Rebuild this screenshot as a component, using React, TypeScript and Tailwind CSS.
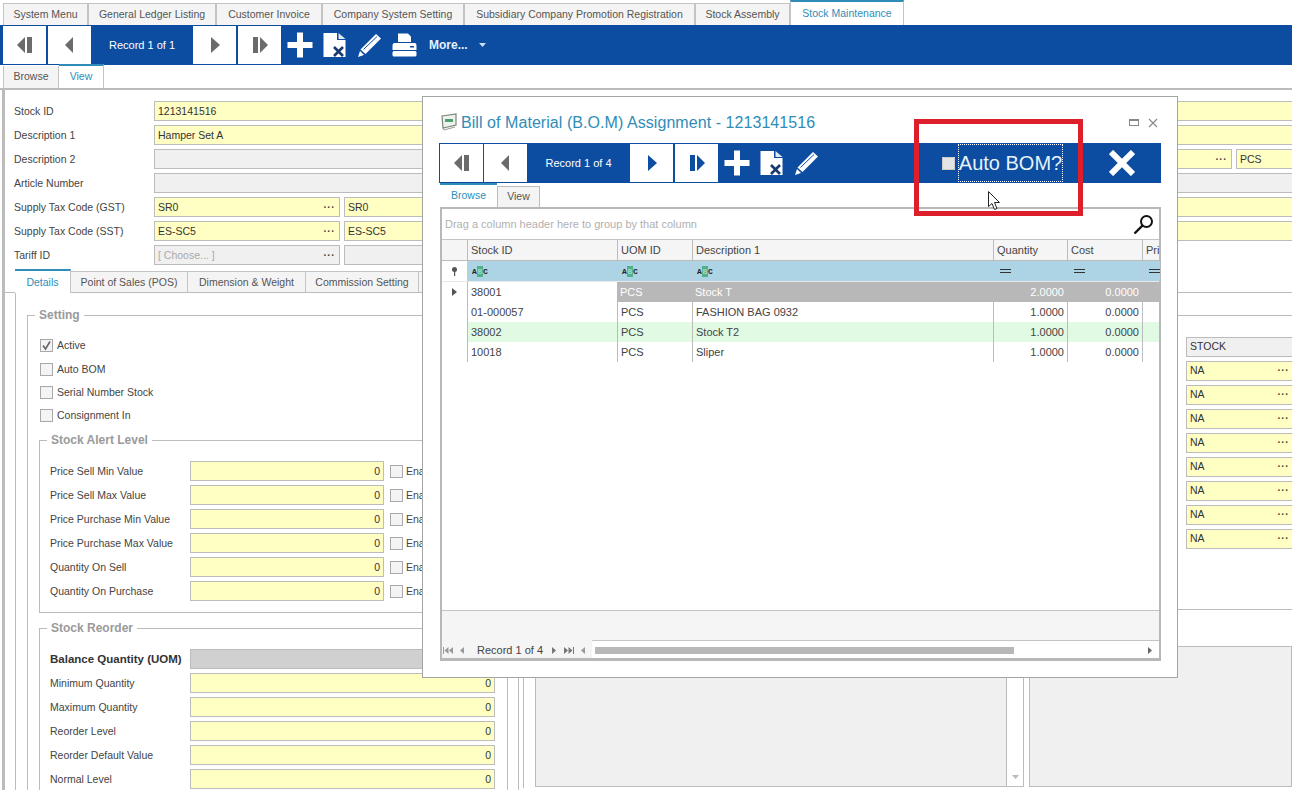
import type { ReactNode } from "react"

const tabs = [
  { label: "System Menu", w: "w-[85px]" },
  { label: "General Ledger Listing", w: "w-[128px]" },
  { label: "Customer Invoice", w: "w-[106px]" },
  { label: "Company System Setting", w: "w-[142px]" },
  { label: "Subsidiary Company Promotion Registration", w: "w-[231px]" },
  { label: "Stock Assembly", w: "w-[95px]" },
]

const alertRows = [
  "Price Sell Min Value",
  "Price Sell Max Value",
  "Price Purchase Min Value",
  "Price Purchase Max Value",
  "Quantity On Sell",
  "Quantity On Purchase",
]

const reorderRows = ["Minimum Quantity", "Maximum Quantity", "Reorder Level", "Reorder Default Value", "Normal Level"]

const gridRows = [
  { id: "38001", uom: "PCS", desc: "Stock T", qty: "2.0000", selected: true },
  { id: "01-000057", uom: "PCS", desc: "FASHION BAG 0932", qty: "1.0000" },
  { id: "38002", uom: "PCS", desc: "Stock T2", qty: "1.0000", green: true },
  { id: "10018", uom: "PCS", desc: "Sliper", qty: "1.0000" },
]

const gridCols = "grid-cols-[25px_150px_75px_301px_74px_75px_1fr]"

function Arrow({ dir, bar, color }: { dir: "left" | "right"; bar?: boolean; color: string }) {
  const d = dir === "left" ? "M15 3 V19 L7 11 Z" : "M8 3 V19 L17 11 Z"
  return (
    <svg width="24" height="22" viewBox="0 0 24 22" fill={color}>
      {bar ? (
        dir === "left" ? (
          <>
            <path d="M12 3 V19 L4 11 Z" />
            <rect x="14" y="3" width="5" height="16" />
          </>
        ) : (
          <>
            <rect x="5" y="3" width="5" height="16" />
            <path d="M12 3 V19 L20 11 Z" />
          </>
        )
      ) : (
        <path d={d} />
      )}
    </svg>
  )
}

function NavButton({ children }: { children: ReactNode }) {
  return <div className="flex h-[38px] w-[43px] shrink-0 items-center justify-center bg-white">{children}</div>
}

function PlusIcon() {
  return (
    <svg width="26" height="26" viewBox="0 0 26 26" fill="white">
      <rect x="10" y="0.5" width="6" height="25" />
      <rect x="0.5" y="10" width="25" height="6" />
    </svg>
  )
}

function DeleteDocIcon() {
  return (
    <svg width="23" height="26" viewBox="0 0 23 26">
      <path d="M0.5 1 H14 V8 H22.5 V25 H0.5 Z" fill="white" />
      <path d="M15.5 1 L22.5 7 H15.5 Z" fill="#dfe8f4" />
      <path d="M11 15 L20 24 M20 15 L11 24" stroke="#17396f" strokeWidth="2.6" />
    </svg>
  )
}

function PencilIcon() {
  return (
    <svg width="25" height="25" viewBox="0 0 25 25" fill="none">
      <path d="M19 1 L24 5.5 L8.5 21 L3.5 16.5 Z" fill="white" />
      <path d="M3 18 L7 22 L1 24 Z" fill="white" />
      <path d="M6.5 16.5 L20 3.5" stroke="#0c4da2" strokeWidth="1" />
    </svg>
  )
}

function PrinterIcon() {
  return (
    <svg width="25" height="24" viewBox="0 0 25 24" fill="white">
      <path d="M6 0.5 H16 L19 3.5 V9 H6 Z" />
      <path d="M2.5 10 H22.5 Q24.5 10 24.5 13 V17 H0.5 V13 Q0.5 10 2.5 10 Z" />
      <rect x="0.5" y="18" width="24" height="5.5" rx="1.5" />
      <rect x="18" y="13" width="4" height="1.5" fill="#0c4da2" />
    </svg>
  )
}

function Field({
  value,
  tone = "yellow",
  dots,
  align,
  className,
}: {
  value?: string
  tone?: "yellow" | "gray" | "dark" | "disabled"
  dots?: boolean
  align?: "right"
  className?: string
}) {
  const toneClass = {
    yellow: "bg-[#ffffc4] text-[#333]",
    gray: "bg-[#f0f0f0] text-[#333]",
    dark: "bg-[#d0d0d0] text-[#333]",
    disabled: "bg-[#f0f0f0] text-[#aaa]",
  }[tone]
  return (
    <div
      className={`flex h-[20px] items-center border border-[#bcbcbc] pl-[3px] pr-[3px] pt-[1px] text-[10.5px] ${toneClass} ${
        align === "right" ? "justify-end" : "justify-between"
      } ${className ?? ""}`}
    >
      <span>{value}</span>
      {dots && <span className="pr-[1px] text-[10px] font-bold leading-none tracking-[0.5px] text-[#444]">···</span>}
    </div>
  )
}

function HeaderRow({ label, children }: { label: string; children: ReactNode }) {
  return (
    <div className="flex h-[20px] items-center">
      <div className="w-[140px] shrink-0 pt-[1px] text-[10.5px] text-[#444]">{label}</div>
      <div className="-mr-[3px] flex flex-1 gap-[4px]">{children}</div>
    </div>
  )
}

function Check({ checked, className }: { checked?: boolean; className?: string }) {
  return (
    <div className={`flex h-[13px] w-[13px] shrink-0 items-center justify-center border border-[#a8a8a8] bg-[#f4f4f4] ${className ?? ""}`}>
      {checked && (
        <svg width="11" height="11" viewBox="0 0 11 11" fill="none">
          <path d="M2 5.5 L4.5 9 L9 1.5" stroke="#666" strokeWidth="1.6" />
        </svg>
      )}
    </div>
  )
}

function Group({ title, className, children }: { title: string; className?: string; children: ReactNode }) {
  return (
    <fieldset className={`border-l border-t border-[#bcbcbc] ${className ?? ""}`}>
      <legend className="ml-[7px] px-[4px] text-[12px] font-bold leading-[13px] text-[#9a9a9a]">{title}</legend>
      {children}
    </fieldset>
  )
}

function AbcIcon() {
  return (
    <span className="flex items-center font-['Liberation_Mono',monospace] text-[8px] font-bold leading-[11px] text-[#222]">
      <span className="w-[5px] text-center">A</span>
      <span className="w-[6px] bg-[#4fb08a] text-center text-[#9fd8c0]">B</span>
      <span className="w-[5px] text-center">C</span>
    </span>
  )
}

function EqualsIcon() {
  return <span className="h-[4px] w-[11px] border-b border-t border-[#333]" />
}

function PagerIcon({ dir, bar, double, color }: { dir: "left" | "right"; bar?: boolean; double?: boolean; color: string }) {
  const tri = (x: number) => (dir === "left" ? `M${x + 4} 1 V8 L${x} 4.5 Z` : `M${x} 1 V8 L${x + 4} 4.5 Z`)
  return (
    <svg width={double ? 11 : 5} height="9" viewBox={double ? "0 0 11 9" : "0 0 5 9"} fill={color}>
      {double ? (
        <>
          {bar && <rect x={dir === "left" ? 0 : 10} y="1" width="1" height="7" />}
          <path d={tri(dir === "left" ? 1.5 : 1)} />
          <path d={tri(dir === "left" ? 6 : 5.5)} />
        </>
      ) : (
        <path d={tri(0)} />
      )}
    </svg>
  )
}

function Dialog() {
  const head = "flex items-center border-l border-[#bcbcbc] pl-[3px] text-[11px] text-[#444]"
  return (
    <div className="absolute left-[422px] top-[96px] flex h-[582px] w-[756px] flex-col border border-[#a4a4a4] bg-white pl-[16px] pr-[16px]">
      <div className="flex h-[46px] shrink-0 items-center pt-[5px]">
        <svg width="16" height="18" viewBox="0 0 16 18" className="ml-[2px] mr-[4px] mt-[-2px]">
          <path d="M1 3 L15 1 V12 L2 15 Z" fill="#eef1ee" stroke="#7a857a" strokeWidth="1.2" />
          <path d="M2 15 L3 17 L14 14" fill="none" stroke="#999" />
          <rect x="4" y="6" width="8" height="3" fill="#4aa36f" />
        </svg>
        <span className="text-[16px] tracking-[0.06px] text-[#2f8db8]">Bill of Material (B.O.M) Assignment - 1213141516</span>
        <div className="ml-auto flex items-center gap-[9px] pr-[3px]">
          <div className="h-[7px] w-[10px] border border-t-2 border-[#888]" />
          <svg width="10" height="10" viewBox="0 0 10 10" stroke="#888" strokeWidth="1.1">
            <path d="M1 1 L9 9 M9 1 L1 9" />
          </svg>
        </div>
      </div>

      {/* toolbar */}
      <div className="flex h-[40px] shrink-0 items-center bg-[#0c4da2] pl-[1px]">
        <NavButton>
          <Arrow dir="left" bar color="#6b6b6b" />
        </NavButton>
        <div className="w-[1px]" />
        <NavButton>
          <Arrow dir="left" color="#6b6b6b" />
        </NavButton>
        <div className="w-[103px] text-center text-[11px] text-white">Record 1 of 4</div>
        <NavButton>
          <Arrow dir="right" color="#0c4da2" />
        </NavButton>
        <div className="w-[2px]" />
        <NavButton>
          <Arrow dir="right" bar color="#0c4da2" />
        </NavButton>
        <div className="ml-[6px] flex items-center gap-[10px]">
          <PlusIcon />
          <DeleteDocIcon />
          <div className="ml-[1px]">
            <PencilIcon />
          </div>
        </div>
        <div className="ml-[123px] h-[13px] w-[13px] border border-[#ccc] bg-[#e4e4e4]" />
        <div className="ml-[3px] flex h-[38px] w-[105px] items-center justify-center whitespace-nowrap border border-dotted border-white text-[20px] text-[#e6f2fb]">
          Auto BOM?
        </div>
        <svg width="26" height="26" viewBox="0 0 26 26" className="ml-[46px]" stroke="white" strokeWidth="6">
          <path d="M2 2 L24 24 M24 2 L2 24" />
        </svg>
      </div>

      {/* sub tabs */}
      <div className="relative z-10 ml-[1px] flex h-[24px] shrink-0 items-end text-[10.5px]">
        <div className="flex h-[24px] w-[57px] items-center justify-center border-t-[2px] border-[#2f8db8] bg-white pb-[1px] text-[#2f8db8]">
          Browse
        </div>
        <div className="flex h-[21px] w-[43px] items-center justify-center border border-b-0 border-[#bcbcbc] bg-[#f4f4f4] text-[#555]">
          View
        </div>
      </div>

      {/* grid */}
      <div className="ml-[1px] flex h-[454px] shrink-0 flex-col border-b-[3px] border-l-[2px] border-r-[2px] border-t-[2px] border-[#b8b8b8]">
        <div className="flex h-[31px] shrink-0 items-center justify-between border-b border-[#c4c4c4] pl-[3px] pr-[5px] pt-[1px] text-[11px] text-[#b0b0b0]">
          <span>Drag a column header here to group by that column</span>
          <svg width="21" height="21" viewBox="0 0 21 21" fill="none" stroke="#111" strokeWidth="2">
            <circle cx="13.5" cy="7.5" r="5.5" />
            <path d="M9.5 11.5 L1.5 19.5" strokeWidth="2.4" />
          </svg>
        </div>
        <div className={`grid h-[21px] shrink-0 ${gridCols} border-b border-[#bcbcbc] bg-[#f5f5f5]`}>
          <div />
          <div className={head}>Stock ID</div>
          <div className={head}>UOM ID</div>
          <div className={head}>Description 1</div>
          <div className={head}>Quantity</div>
          <div className={head}>Cost</div>
          <div className={`${head} overflow-hidden`}>Pri</div>
        </div>
        <div className={`grid h-[21px] shrink-0 ${gridCols} border-b border-[#e8e8e8]`}>
          <div className="flex items-center justify-center">
            <svg width="7" height="9" viewBox="0 0 7 9" fill="#555">
              <circle cx="3.5" cy="2.5" r="2.5" />
              <rect x="3" y="4" width="1.2" height="5" />
            </svg>
          </div>
          {[0, 1, 2].map((i) => (
            <div key={i} className="flex items-center border-l border-[#bcd] bg-[#acd4e4] pl-[4px]">
              <AbcIcon />
            </div>
          ))}
          {[0, 1, 2].map((i) => (
            <div key={i} className="flex items-center border-l border-[#bcd] bg-[#acd4e4] pl-[6px]">
              <EqualsIcon />
            </div>
          ))}
        </div>
        {gridRows.map((r) => {
          const rest = r.selected ? "bg-[#b8b8b8] text-white" : r.green ? "bg-[#e0fae4] text-[#444]" : "bg-white text-[#444]"
          const line = r.selected ? "" : "border-l border-[#bcbcbc]"
          return (
            <div key={r.id} className={`grid h-[20px] shrink-0 ${gridCols} text-[11px]`}>
              <div className="flex items-center justify-center">
                {r.selected && (
                  <svg width="5" height="8" viewBox="0 0 5 8" fill="#555">
                    <path d="M0 0 L5 4 L0 8 Z" />
                  </svg>
                )}
              </div>
              <div className={`flex items-center border-l border-[#bcbcbc] pl-[3px] text-[#444] ${r.green ? "bg-[#e0fae4]" : "bg-white"}`}>
                {r.id}
              </div>
              <div className={`flex items-center pl-[3px] ${line} ${rest}`}>{r.uom}</div>
              <div className={`flex items-center pl-[3px] ${line} ${rest}`}>{r.desc}</div>
              <div className={`flex items-center justify-end pr-[3px] ${line} ${rest}`}>{r.qty}</div>
              <div className={`flex items-center justify-end pr-[3px] ${line} ${rest}`}>0.0000</div>
              <div className={`${line} ${rest}`} />
            </div>
          )
        })}
        <div className="flex-1" />
        <div className="h-[30px] shrink-0 border-t border-[#c4c4c4] bg-[#f5f5f5]" />
        <div className="flex h-[18px] shrink-0 items-center border-t border-[#c4c4c4] bg-white text-[11px] text-[#444]">
          <div className="-mt-[1px] flex h-[18px] w-[150px] items-center bg-[#f5f5f5] pl-[1px] pt-[3px]">
            <PagerIcon dir="left" bar double color="#999" />
            <span className="ml-[6px] flex">
              <PagerIcon dir="left" color="#999" />
            </span>
            <span className="ml-[12px]">Record 1 of 4</span>
            <span className="ml-[9px] flex">
              <PagerIcon dir="right" color="#777" />
            </span>
            <span className="ml-[6px] flex">
              <PagerIcon dir="right" bar double color="#777" />
            </span>
            <span className="ml-[7px] flex">
              <PagerIcon dir="left" color="#999" />
            </span>
          </div>
          <div className="ml-[3px] mt-[2px] h-[7px] w-[419px] bg-[#b8b8b8]" />
          <div className="ml-auto mt-[2px] flex pr-[6px]">
            <PagerIcon dir="right" color="#666" />
          </div>
        </div>
      </div>
    </div>
  )
}

export default function App() {
  return (
    <div className="relative h-[790px] w-[1292px] overflow-hidden bg-white font-['Liberation_Sans',Arial,sans-serif]">
      {/* top tabs */}
      <div className="flex h-[25px] items-end pl-[3px] text-[10.5px] text-[#555]">
        {tabs.map((t) => (
          <div key={t.label} className={`flex h-[22px] ${t.w} items-center justify-center border-l border-r border-t border-[#c4c4c4] bg-[#f4f4f4]`}>
            {t.label}
          </div>
        ))}
        <div className="flex h-[25px] w-[114px] items-center justify-center border-l border-r border-[#c4c4c4] border-t-[2px] border-t-[#2f8db8] bg-white text-[#2f8db8]">
          Stock Maintenance
        </div>
      </div>

      {/* toolbar */}
      <div className="flex h-[40px] items-center bg-[#0c4da2] pl-[3px]">
        <NavButton>
          <Arrow dir="left" bar color="#6b6b6b" />
        </NavButton>
        <div className="w-[2px]" />
        <NavButton>
          <Arrow dir="left" color="#6b6b6b" />
        </NavButton>
        <div className="w-[102px] text-center text-[11px] text-white">Record 1 of 1</div>
        <NavButton>
          <Arrow dir="right" color="#6b6b6b" />
        </NavButton>
        <div className="w-[2px]" />
        <NavButton>
          <Arrow dir="right" bar color="#6b6b6b" />
        </NavButton>
        <div className="ml-[6px] flex items-center gap-[10px]">
          <PlusIcon />
          <DeleteDocIcon />
          <div className="ml-[1px]">
            <PencilIcon />
          </div>
          <PrinterIcon />
        </div>
        <span className="ml-[12px] text-[12px] font-bold text-[#e6f0fa]">More...</span>
        <svg width="7" height="4" viewBox="0 0 7 4" fill="#d0dff0" className="ml-[11px]">
          <path d="M0 0 H7 L3.5 4 Z" />
        </svg>
      </div>

      {/* browse / view */}
      <div className="flex h-[25px] items-end border-b-2 border-[#bcbcbc] pl-[3px] text-[10.5px]">
        <div className="flex h-[22px] w-[56px] items-center justify-center border-l border-r border-[#c4c4c4] bg-[#f4f4f4] text-[#555]">
          Browse
        </div>
        <div className="flex h-[24px] w-[45px] items-center justify-center border-r border-[#c4c4c4] border-t-[2px] border-t-[#2f8db8] bg-white text-[#2f8db8]">
          View
        </div>
      </div>

      {/* form */}
      <div className="ml-[2px] h-[700px] border-l-[3px] border-[#bcbcbc]">
        <div className="flex flex-col gap-[4px] pl-[9px] pt-[11px]">
          <HeaderRow label="Stock ID">
            <Field value="1213141516" className="flex-1" />
          </HeaderRow>
          <HeaderRow label="Description 1">
            <Field value="Hamper Set A" className="flex-1" />
          </HeaderRow>
          <HeaderRow label="Description 2">
            <Field tone="gray" className="w-[540px]" />
            <Field dots className="flex-1" />
            <Field value="PCS" className="w-[59px]" />
          </HeaderRow>
          <HeaderRow label="Article Number">
            <Field tone="gray" className="flex-1" />
          </HeaderRow>
          <HeaderRow label="Supply Tax Code (GST)">
            <Field value="SR0" dots className="w-[186px]" />
            <Field value="SR0" className="flex-1" />
          </HeaderRow>
          <HeaderRow label="Supply Tax Code (SST)">
            <Field value="ES-SC5" dots className="w-[186px]" />
            <Field value="ES-SC5" className="flex-1" />
          </HeaderRow>
          <HeaderRow label="Tariff ID">
            <Field value="[ Choose... ]" tone="disabled" dots className="w-[186px]" />
            <Field tone="gray" className="w-[200px]" />
          </HeaderRow>
        </div>

        {/* detail tabs */}
        <div className="mt-[5px] flex h-[23px] items-end border-b border-[#bcbcbc] pl-[10px] text-[10.5px]">
          <div className="relative z-10 -mb-[1px] flex h-[24px] w-[56px] items-center justify-center border-r border-[#c4c4c4] border-t-[2px] border-t-[#2f8db8] bg-white pt-[1px] text-[#2f8db8]">
            Details
          </div>
          <div className="flex h-[21px] w-[117px] items-center justify-center border-r border-t border-[#c4c4c4] bg-[#f4f4f4] pt-[1px] text-[#555]">
            Point of Sales (POS)
          </div>
          <div className="flex h-[21px] w-[118px] items-center justify-center border-r border-t border-[#c4c4c4] bg-[#f4f4f4] pt-[1px] text-[#555]">
            Dimension &amp; Weight
          </div>
          <div className="flex h-[21px] w-[113px] items-center justify-center border-r border-t border-[#c4c4c4] bg-[#f4f4f4] pt-[1px] text-[#555]">
            Commission Setting
          </div>
          <div className="h-[21px] w-[20px] border-t border-[#c4c4c4] bg-[#f4f4f4]" />
        </div>

        {/* detail body */}
        <div className="ml-[10px] flex h-[500px] border-l border-[#bcbcbc]">
          <div className="w-[492px] shrink-0 pl-[11px] pt-[16px]">
            <Group title="Setting" className="h-[500px] w-[481px] border-r text-[10.5px] text-[#444]">
              <div className="pl-[12px] pt-[17px]">
                <div className="flex h-[13px] items-center gap-[4px]">
                  <Check checked />
                  Active
                </div>
                <div className="mt-[11px] flex h-[13px] items-center gap-[4px]">
                  <Check />
                  Auto BOM
                </div>
                <div className="mt-[10px] flex h-[13px] items-center gap-[4px]">
                  <Check />
                  Serial Number Stock
                </div>
                <div className="mt-[10px] flex h-[13px] items-center gap-[4px]">
                  <Check />
                  Consignment In
                </div>
                <Group title="Stock Alert Level" className="-ml-[1px] mt-[12px] w-[457px] border-b border-r pb-[11px]">
                  <div className="flex flex-col gap-[4px] pl-[10px] pt-[14px]">
                    {alertRows.map((label) => (
                      <div key={label} className="flex h-[20px] items-center">
                        <div className="w-[140px] pt-[1px]">{label}</div>
                        <Field value="0" align="right" className="w-[194px]" />
                        <Check className="ml-[6px]" />
                        <span className="ml-[3px] pt-[1px]">Enable</span>
                      </div>
                    ))}
                  </div>
                </Group>
                <Group title="Stock Reorder" className="-ml-[1px] mt-[9px] h-[200px] w-[468px]">
                  <div className="flex flex-col gap-[4px] pl-[10px] pt-[14px]">
                    <div className="flex h-[20px] items-center">
                      <div className="w-[140px] whitespace-nowrap pt-[1px] text-[11.5px] font-bold text-[#333]">Balance Quantity (UOM)</div>
                      <Field tone="dark" className="w-[305px]" />
                    </div>
                    {reorderRows.map((label) => (
                      <div key={label} className="flex h-[20px] items-center">
                        <div className="w-[140px] pt-[1px]">{label}</div>
                        <Field value="0" align="right" className="w-[305px]" />
                      </div>
                    ))}
                  </div>
                </Group>
              </div>
            </Group>
          </div>

          {/* right side */}
          <div className="flex flex-1 flex-col">
            <div className="flex h-[23px] shrink-0 border-b border-[#bcbcbc]" />
            <div className="flex h-[294px] shrink-0 justify-end border-b border-[#bcbcbc] pt-[20px]">
              <div className="-mr-[2px] mt-[1px] flex w-[108px] flex-col gap-[4px]">
                <Field value="STOCK" tone="gray" className="!pt-0" />
                {[0, 1, 2, 3, 4, 5, 6, 7].map((i) => (
                  <Field key={i} value="NA" dots className="!pt-0" />
                ))}
              </div>
            </div>
            <div className="flex flex-1 pl-[10px]">
              <div className="flex-1 border-l border-[#bcbcbc] pl-[4px]">
                <div className="flex h-[178px] border-l border-[#bcbcbc] pl-[11px] pt-[36px]">
                  <div className="flex h-[141px] w-[472px] border border-[#bcbcbc] bg-[#f0f0f0]" />
                  <div className="relative h-[141px] w-[17px] border-b border-r border-[#bcbcbc] bg-white">
                    <svg width="7" height="4" viewBox="0 0 7 4" fill="#bbb" className="absolute bottom-[7px] left-[5px]">
                      <path d="M0 0 H7 L3.5 4 Z" />
                    </svg>
                  </div>
                  <div className="ml-[5px] h-[141px] flex-1 border border-[#bcbcbc] bg-[#f0f0f0]" />
                </div>
              </div>
            </div>
          </div>
        </div>
      </div>

      <Dialog />

      {/* annotation */}
      <div className="pointer-events-none absolute left-[914px] top-[119px] h-[97px] w-[169px] border-[5px] border-[#dc1f2a]" />
      <svg width="14" height="20" viewBox="0 0 14 20" className="absolute left-[988px] top-[191px]" fill="white" stroke="#222" strokeWidth="1">
        <path d="M0.5 0.5 V15.5 L4 12.5 L6.5 18.5 L9 17.5 L6.5 11.5 L11.5 11.5 Z" />
      </svg>
    </div>
  )
}
